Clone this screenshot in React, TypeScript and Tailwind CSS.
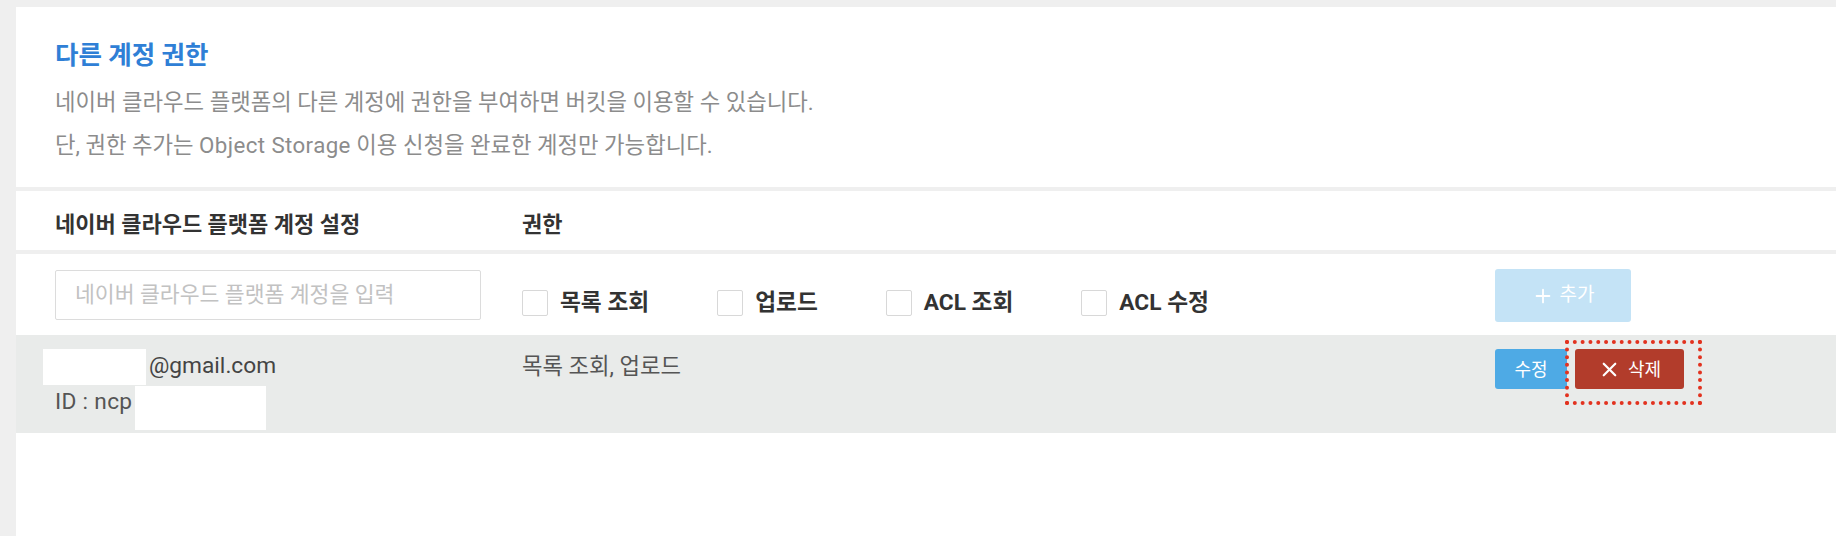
import React from "react";
import { Plus, X } from "lucide-react";

const perms = ["목록 조회", "업로드", "ACL 조회", "ACL 수정"];

export default function App() {
  return (
    <div className="w-[1836px] h-[536px] overflow-hidden bg-[#efefef] pt-[7px] pl-[16px] flex font-[Roboto,'Noto_Sans_CJK_KR',sans-serif]">
      <div className="flex-1 bg-white flex flex-col">
        {/* intro */}
        <div className="h-[180px] pl-[39px] pt-[32px]">
          <h2 className="text-[25.5px] leading-[32px] font-bold text-[#2f7fd6]">다른 계정 권한</h2>
          <p className="mt-[10px] text-[22.3px] leading-[43px] text-[#8c8c8c]">
            네이버 클라우드 플랫폼의 다른 계정에 권한을 부여하면 버킷을 이용할 수 있습니다.
          </p>
          <p className="text-[22.3px] leading-[43px] text-[#8c8c8c]">
            단, 권한 추가는 <span className="tracking-[0.4px]">Object Storage</span> 이용 신청을 완료한 계정만 가능합니다.
          </p>
        </div>
        <div className="h-[4px] bg-[#efefef]" />

        {/* header */}
        <div className="h-[59px] flex items-start pl-[39px] pt-[21px]">
          <div className="w-[467px] text-[22px] leading-[26px] font-bold text-[#333]">
            네이버 클라우드 플랫폼 계정 설정
          </div>
          <div className="text-[22px] leading-[26px] font-bold text-[#333]">권한</div>
        </div>
        <div className="h-[4px] bg-[#efefef]" />

        {/* input row */}
        <div className="h-[81px] flex items-start pl-[39px]">
          <div className="w-[467px]">
            <div className="mt-[16px] w-[426px] h-[50px] border border-[#dcdcdc] rounded-[2px] flex items-center pl-[19px] text-[21.6px] text-[#c2c2c2]">
              네이버 클라우드 플랫폼 계정을 입력
            </div>
          </div>
          <div className="w-[973px] mt-[36px] h-[26px] flex items-center gap-[68px]">
            {perms.map((p) => (
              <div key={p} className="flex items-center gap-[12px]">
                <span className="w-[26px] h-[26px] border border-[#d8d8d8] rounded-[2px] bg-white" />
                <span className="text-[22.7px] leading-[26px] font-bold text-[#333]">{p}</span>
              </div>
            ))}
          </div>
          <button className="mt-[15px] w-[136px] h-[53px] rounded-[3px] bg-[#c4e3f6] text-white text-[19px] flex items-center justify-center gap-[6px]">
            <Plus size={22} strokeWidth={2} />
            <span>추가</span>
          </button>
        </div>

        {/* data row */}
        <div className="h-[98px] bg-[#e9ebea] flex items-start pl-[39px] pt-[14px]">
          <div className="w-[467px] text-[22.7px] text-[#444]">
            <div className="flex items-center h-[35px]">
              <span className="inline-block -ml-[12px] w-[103px] h-[36px] bg-white" />
              <span className="ml-[3px]">@gmail.com</span>
            </div>
            <div className="flex items-start">
              <span className="leading-[35px] text-[#555] tracking-[0.3px]">ID&nbsp;:&nbsp;ncp</span>
              <span className="inline-block ml-[3px] mt-[2px] w-[131px] h-[44px] bg-white" />
            </div>
          </div>
          <div className="w-[973px] text-[22.3px] leading-[35px] text-[#555]">목록 조회, 업로드</div>
          <div className="flex items-start gap-[8px]">
            <button className="w-[72px] h-[40px] rounded-[3px] bg-[#4eaae5] text-white text-[18px] flex items-center justify-center">
              수정
            </button>
            <div className="relative">
              <span className="absolute -left-[10px] -top-[9px] -right-[18px] -bottom-[16px] border-[4px] border-dotted border-[#e2321f]" />
              <button className="relative w-[109px] h-[40px] rounded-[3px] bg-[#b23c2b] text-white text-[18px] flex items-center justify-center gap-[7px]">
                <X size={23} strokeWidth={2.3} />
                <span>삭제</span>
              </button>
            </div>
          </div>
        </div>
      </div>
    </div>
  );
}
